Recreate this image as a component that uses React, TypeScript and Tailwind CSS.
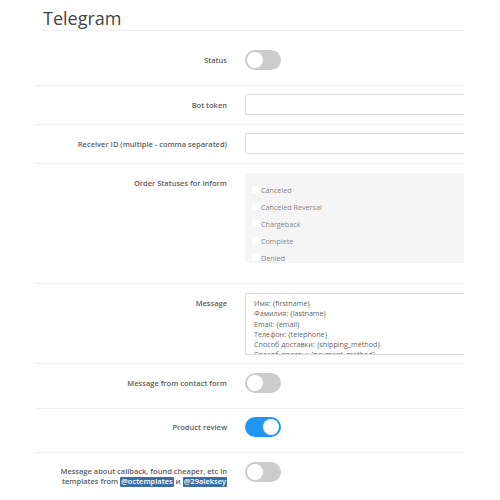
import { useState } from 'react'

const statuses = ['Canceled', 'Canceled Reversal', 'Chargeback', 'Complete', 'Denied', 'Expired', 'Failed']

const messageLines = [
  'Имя: {firstname}',
  'Фамилия: {lastname}',
  'Email: {email}',
  'Телефон: {telephone}',
  'Способ доставки: {shipping_method}',
  'Способ оплаты: {payment_method}',
  'Итого: {total}',
]

function Toggle({ on, onChange }: { on: boolean; onChange: () => void }) {
  return (
    <button
      type="button"
      onClick={onChange}
      className={`flex h-[20px] w-[36px] shrink-0 items-center rounded-full px-[2px] ${on ? 'bg-[#2196f3] justify-end' : 'bg-[#cccccc] justify-start'}`}
    >
      <span className="block h-[16px] w-[16px] rounded-full bg-white" />
    </button>
  )
}

function Label({ children, className = '' }: { children: React.ReactNode; className?: string }) {
  return (
    <div className={`w-[192px] shrink-0 pr-[1px] text-right text-[7.5px] font-semibold leading-[10px] text-[#606060] ${className}`}>
      {children}
    </div>
  )
}

export default function App() {
  const [status, setStatus] = useState(false)
  const [contact, setContact] = useState(false)
  const [review, setReview] = useState(true)
  const [callback, setCallback] = useState(false)

  return (
    <div className="h-[500px] w-[500px] overflow-hidden bg-white" style={{ fontFamily: '"Open Sans", sans-serif' }}>
      <div className="ml-[36px] w-[428px] overflow-hidden">
        {/* Title */}
        <div className="ml-[7px] h-[31px] border-b border-[#eeeeee]">
          <h1 className="pt-[7px] text-[18px] font-normal leading-[22px] text-[#444]">Telegram</h1>
        </div>

        {/* Status */}
        <div className="flex h-[55px] items-start gap-[17px] border-b border-[#eeeeee] pt-[19px]">
          <Label className="pt-[5px]">Status</Label>
          <Toggle on={status} onChange={() => setStatus(!status)} />
        </div>

        {/* Bot token */}
        <div className="flex h-[39px] items-start gap-[17px] border-b border-[#eeeeee] pt-[8px]">
          <Label className="pt-[6px]">Bot token</Label>
          <input className="h-[21px] w-[260px] shrink-0 rounded-[2px] border border-[#dddddd] bg-white px-2 text-[8px] outline-none" />
        </div>

        {/* Receiver */}
        <div className="flex h-[39px] items-start gap-[17px] border-b border-[#eeeeee] pt-[8px]">
          <Label className="pt-[6px]">Receiver ID (multiple - comma separated)</Label>
          <input className="h-[21px] w-[260px] shrink-0 rounded-[2px] border border-[#dddddd] bg-white px-2 text-[8px] outline-none" />
        </div>

        {/* Order statuses */}
        <div className="flex h-[120px] items-start gap-[17px] border-b border-[#eeeeee] pt-[9px]">
          <Label className="pt-[5px]">Order Statuses for inform</Label>
          <div className="h-[90px] w-[260px] shrink-0 overflow-hidden bg-[#f5f5f5] pl-[7px] pt-[9px]">
            {statuses.map(s => (
              <label key={s} className="flex h-[17px] items-center gap-[2px] text-[7.2px] text-[#888]">
                <span className="mb-[3px] block h-[7px] w-[7px] bg-white" />
                <span>{s}</span>
              </label>
            ))}
          </div>
        </div>

        {/* Message */}
        <div className="flex h-[80px] items-start gap-[17px] border-b border-[#eeeeee] pt-[9px]">
          <Label className="pt-[5px]">Message</Label>
          <div className="h-[62px] w-[260px] shrink-0 overflow-hidden rounded-[2px] border border-[#dddddd] bg-white pl-[8px] pt-[4px]">
            {messageLines.map(l => (
              <div key={l} className="text-[7.2px] leading-[10.3px] text-[#666]">{l}</div>
            ))}
          </div>
        </div>

        {/* Contact form */}
        <div className="flex h-[45px] items-start gap-[17px] border-b border-[#eeeeee] pt-[9px]">
          <Label className="pt-[5px]">Message from contact form</Label>
          <Toggle on={contact} onChange={() => setContact(!contact)} />
        </div>

        {/* Product review */}
        <div className="flex h-[44px] items-start gap-[17px] border-b border-[#eeeeee] pt-[8px]">
          <Label className="pt-[5px]">Product review</Label>
          <Toggle on={review} onChange={() => setReview(!review)} />
        </div>

        {/* Callback */}
        <div className="flex items-start gap-[17px] pt-[9px]">
          <Label className="pt-[4px] leading-[10.5px]">
            Message about callback, found cheaper, etc in templates from{' '}
            <span className="inline-block rounded-[1px] bg-[#3a6ea5] px-[1px] leading-[9.5px] text-white">@octemplates</span> и{' '}
            <span className="inline-block rounded-[1px] bg-[#3a6ea5] px-[1px] leading-[9.5px] text-white">@29aleksey</span>
          </Label>
          <Toggle on={callback} onChange={() => setCallback(!callback)} />
        </div>
      </div>
    </div>
  )
}
